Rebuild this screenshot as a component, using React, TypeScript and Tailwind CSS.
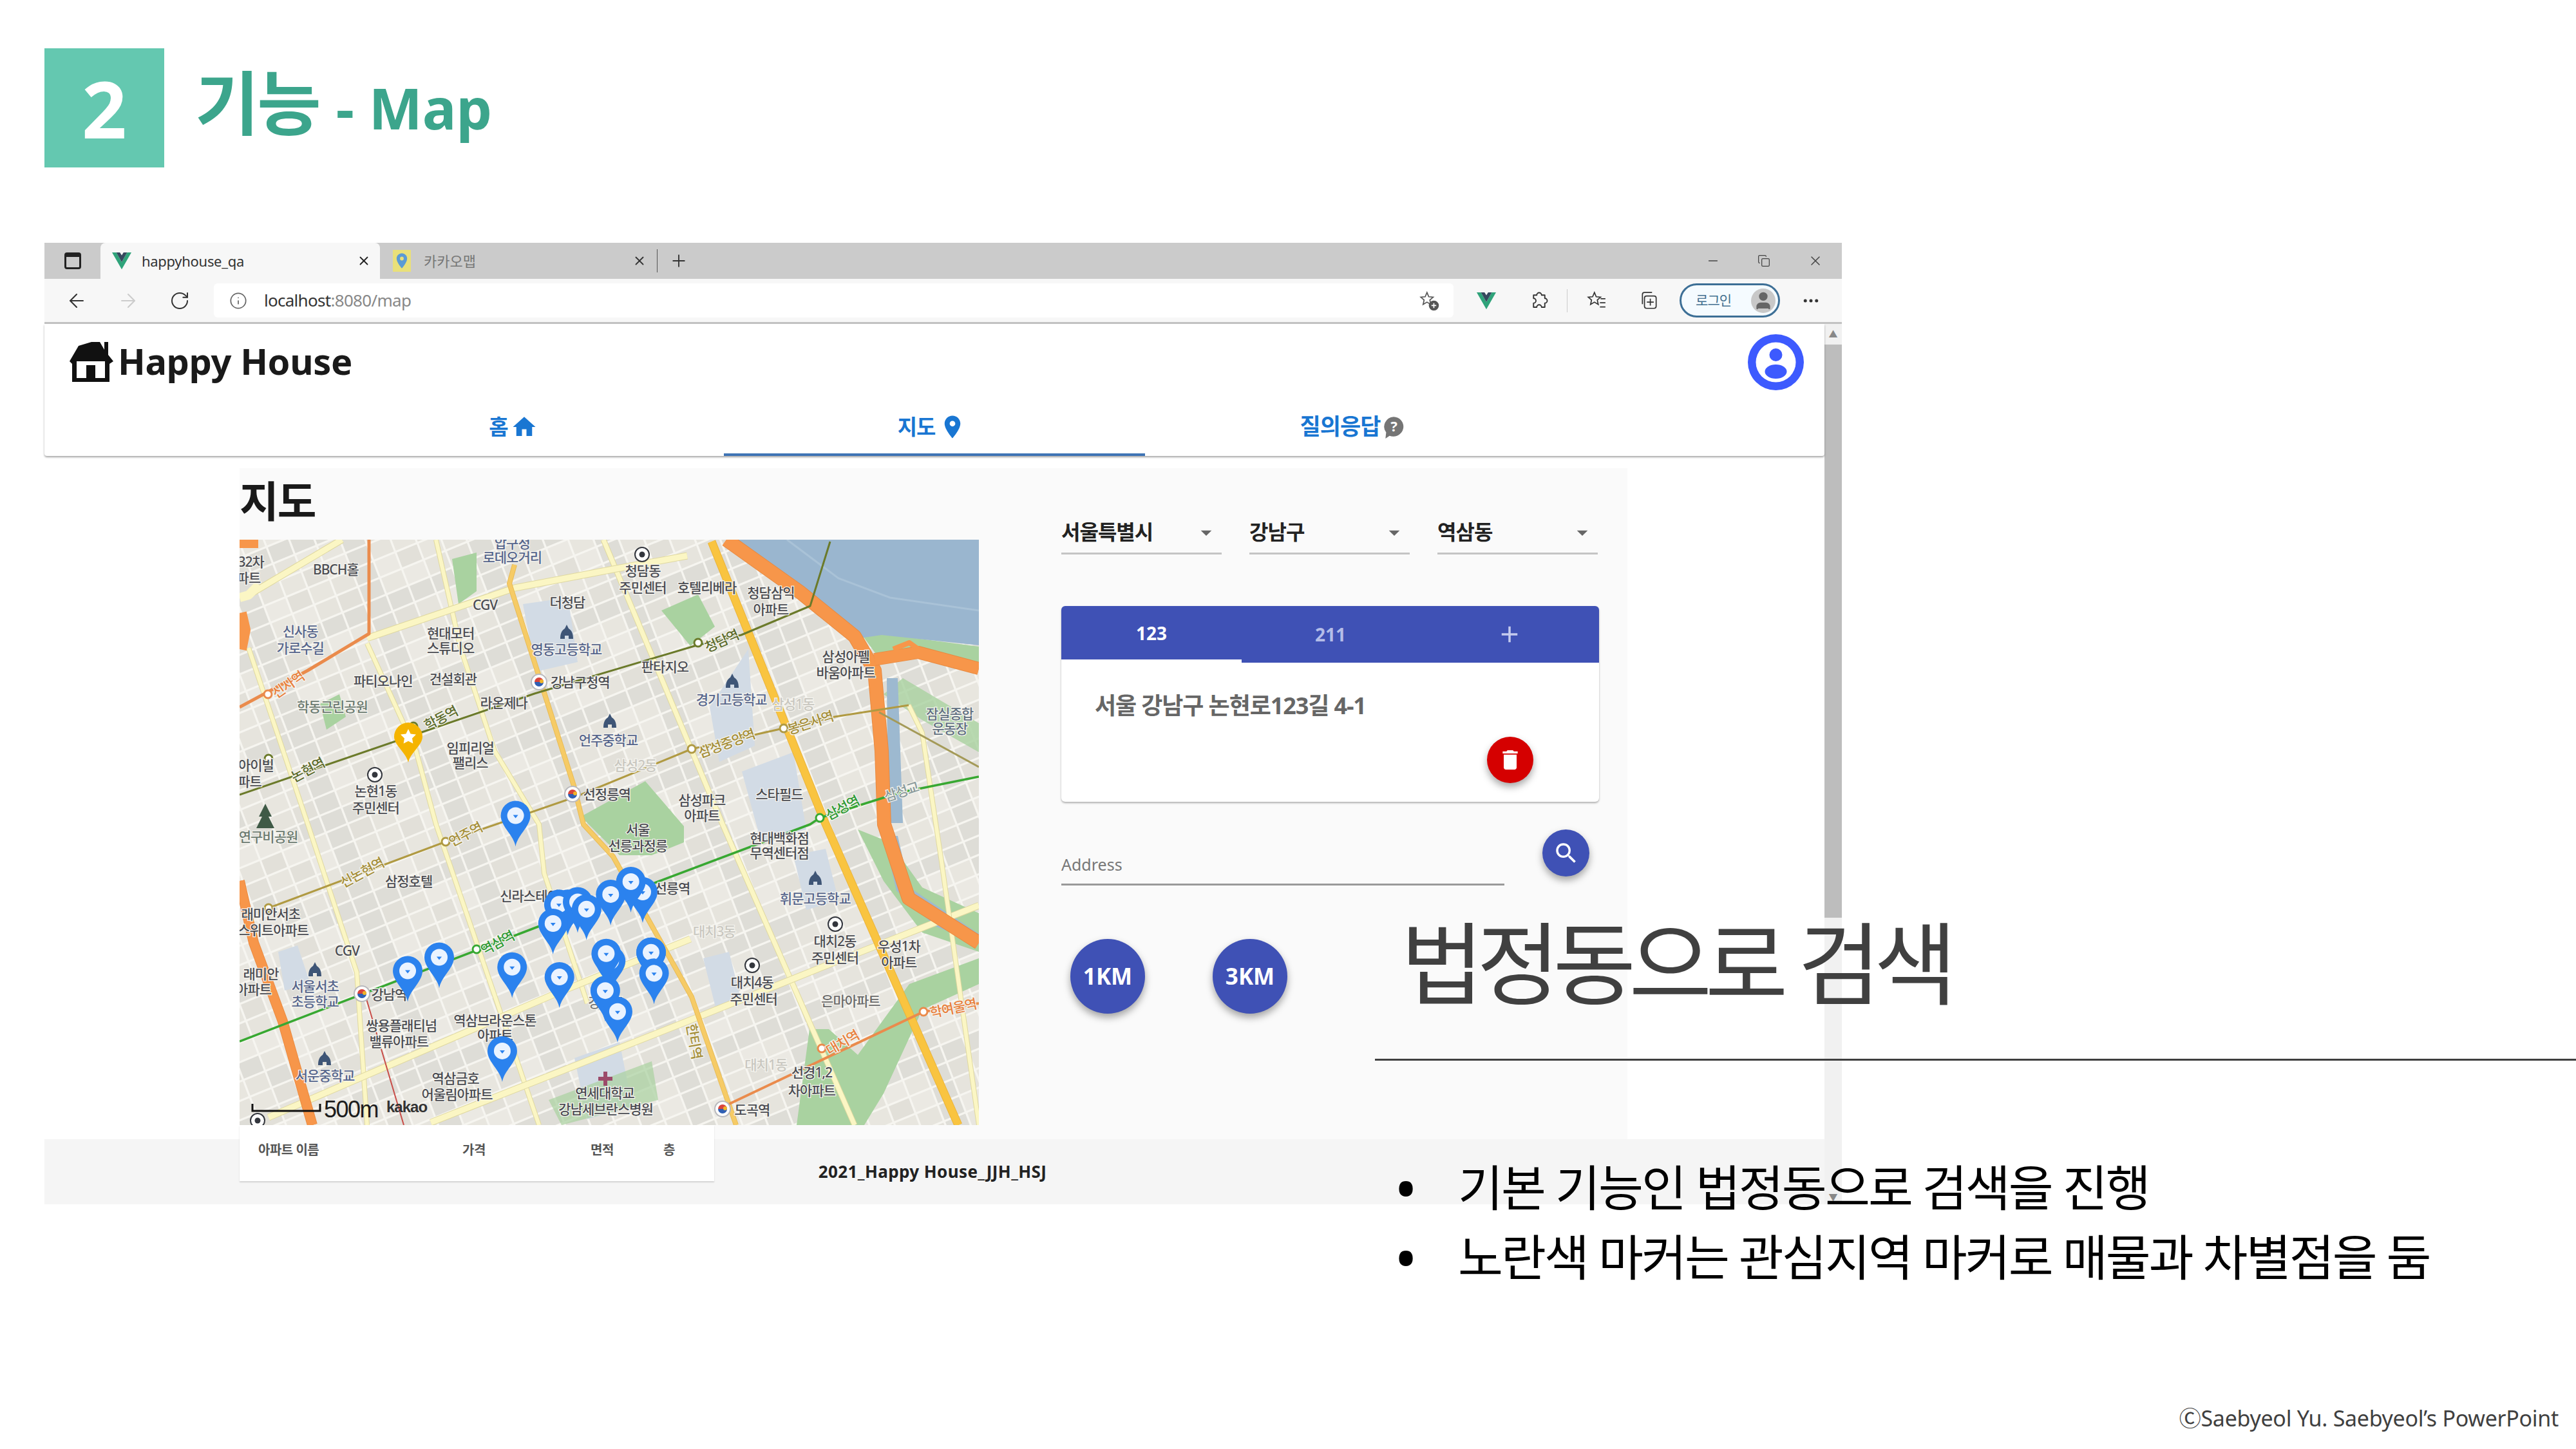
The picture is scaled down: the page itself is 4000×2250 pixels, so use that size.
import React from "react";
import { ArrowLeft, ArrowRight, RotateCw, Info, Plus, Minus, X, Copy, Ellipsis, User } from "lucide-react";
import { MdAdd, MdArrowDropDown, MdDelete, MdHome, MdPlace, MdSearch } from "react-icons/md";

const zx = (x: number) => x / 1.307 - 32;
const y3 = (y: number) => y / 2.8 - 118;
const y4 = (y: number) => y / 2.613 + 442;

type L = [string, number, number, number?, string?, number?];
const DK = "#4b4c52";
const BL = "#56658c";
const OR = "#e8803c";
const GD = "#a58f3a";
const GR = "#2f9a35";
const OL = "#5c6b2c";
const FD = "#c9c7c0";

const labels3: L[] = [
  ["BBCH홀", 237, 458], ["압구정", 595, 345, 0, BL], ["로데오거리", 595, 405, 0, BL], ["청담동", 860, 465], ["주민센터", 860, 538],
  ["호텔리베라", 990, 538], ["청담삼익", 1120, 560], ["아파트", 1120, 632], ["더청담", 707, 603], ["CGV", 540, 612],
  ["신사동", 165, 728, 0, BL], ["가로수길", 165, 800, 0, BL], ["현대모터", 470, 735], ["스튜디오", 470, 800], ["영동고등학교", 705, 805, 0, BL],
  ["청담역", 1020, 770, -24, OL], ["판타지오", 905, 882], ["삼성아펠", 1272, 838], ["바움아파트", 1272, 908], ["파티오나인", 333, 943],
  ["건설회관", 475, 935], ["강남구청역", 733, 948], ["신사역", 140, 960, -35, OR], ["라온제나", 578, 1040], ["학동근린공원", 230, 1055, 0, "#6b7a70"],
  ["경기고등학교", 1040, 1025, 0, BL], ["삼성1동", 1165, 1045, 0, FD], ["잠실종합", 1483, 1085, 0, "#5f6f80"], ["운동장", 1483, 1150, 0, "#5f6f80"],
  ["학동역", 450, 1105, -28, OL], ["봉은사역", 1200, 1125, -18, GD], ["언주중학교", 790, 1200, 0, BL], ["삼성중앙역", 1030, 1215, -20, GD],
  ["임피리얼", 510, 1235], ["팰리스", 510, 1300], ["삼성2동", 845, 1310, 0, FD], ["논현1동", 318, 1423], ["주민센터", 318, 1495],
  ["선정릉역", 787, 1437], ["삼성파크", 980, 1462], ["아파트", 980, 1530], ["스타필드", 1137, 1435], ["삼성역", 1265, 1495, -28, GR],
  ["삼성교", 1385, 1425, -18, "#8a9a9a"], ["아이빌", 75, 1310], ["파트", 62, 1380], ["논현역", 180, 1330, -28, OL], ["32차", 65, 425], ["파트", 60, 495],
];
const labels4: L[] = [
  ["연구비공원", 100, 50, 0, "#6b7a70"], ["언주역", 500, 40, -28, GD], ["서울", 850, 20], ["선릉과정릉", 850, 85], ["현대백화점", 1137, 55], ["무역센터점", 1137, 115],
  ["신논현역", 290, 195, -28, GD], ["삼정호텔", 385, 230], ["신라스테이", 630, 290], ["선릉역", 920, 258], ["휘문고등학교", 1210, 300, 0, BL],
  ["래미안서초", 105, 362], ["스위트아파트", 110, 428], ["CGV", 260, 512], ["대치2동", 1250, 472], ["주민센터", 1250, 540], ["우성1차", 1380, 495], ["아파트", 1380, 558],
  ["역삼역", 565, 480, -28, GR], ["대치3동", 1005, 435, 0, FD], ["래미안", 85, 605], ["아파트", 70, 670], ["서울서초", 195, 655, 0, BL], ["초등학교", 195, 718, 0, BL],
  ["강남역", 345, 690], ["대치4동", 1082, 640], ["주민센터", 1085, 708], ["은마아파트", 1282, 715, 0, "#6a6a6a"], ["학여울역", 1490, 745, -12, OR],
  ["쌍용플래티넘", 370, 815], ["밸류아파트", 365, 880], ["역삼브라운스톤", 560, 795], ["아파트", 560, 855], ["대치역", 1265, 885, -30, OR], ["대치1동", 1110, 975, 0, FD],
  ["선경1,2", 1203, 1005], ["차아파트", 1203, 1078], ["서운중학교", 215, 1020, 0, BL], ["역삼금호", 480, 1030], ["어울림아파트", 483, 1095],
  ["연세대학교", 783, 1090], ["강남세브란스병원", 785, 1155], ["도곡역", 1082, 1158], ["한티역", 965, 880, 80, GD], ["강남구", 785, 720, 0, "#777"],
];

const pins: [number, number][] = [
  [602, 90], [708, 450], [690, 450], [728, 440], [860, 400], [836, 358], [795, 410], [746, 470], [678, 528], [877, 645], [877, 645], [447, 665], [383, 720], [595, 705], [691, 745],
  [795, 680], [786, 650], [883, 730], [784, 800], [809, 885], [575, 1045],
];

const cells = () => {
  const out: React.ReactNode[] = [];
  const tones = ["#e8e6df", "#e2e0d9", "#ebe9e3", "#dedDd7", "#e6e4dd"];
  for (let i = -32; i < 44; i++) {
    for (let j = -12; j < 46; j++) {
      const ox = i * 34 + j * 10;
      const oy = -i * 14 + j * 26;
      if (ox < -50 || ox > 1170 || oy < -40 || oy > 930) continue;
      const h = Math.abs((i * 7 + j * 13 + i * j * 3) % 5);
      const a = 31;
      const b = 23;
      const pts = `${ox},${oy} ${ox + a},${oy - a * 0.41} ${ox + a + b * 0.38},${oy - a * 0.41 + b} ${ox + b * 0.38},${oy + b}`;
      out.push(<polygon key={`${i}-${j}`} points={pts} fill={tones[h]} />);
    }
  }
  return out;
};

function Road({ d, w, c, edge }: { d: string; w: number; c: string; edge?: string }) {
  return (
    <>
      {edge ? <polyline points={d} fill="none" stroke={edge} strokeWidth={w + 2} strokeLinejoin="round" /> : null}
      <polyline points={d} fill="none" stroke={c} strokeWidth={w} strokeLinejoin="round" />
    </>
  );
}

function Pin({ x, y }: { x: number; y: number }) {
  return (
    <g transform={`translate(${x} ${y})`}>
      <path d="M0 0 C-3 -18 -23 -31 -23 -48 A23 23 0 1 1 23 -48 C23 -31 3 -18 0 0Z" fill="#2b82ee" />
      <circle cx="0" cy="-48" r="13" fill="#eaf3ff" />
      <path d="M-4 -49 H4 L0 -44Z" fill="#2b82ee" />
    </g>
  );
}

function Station({ x, y }: { x: number; y: number }) {
  return (
    <g>
      <circle cx={x} cy={y} r="12" fill="#fff" stroke="#b9b9bd" strokeWidth="2" />
      <path d={`M${x - 7} ${y} A7 7 0 0 1 ${x + 7} ${y}Z`} fill="#d8443c" />
      <path d={`M${x - 7} ${y} A7 7 0 0 0 ${x + 7} ${y}Z`} fill="#2f5fb3" />
      <circle cx={x + 4} cy={y - 1} r="3" fill="#f0b429" />
    </g>
  );
}

function Target({ x, y }: { x: number; y: number }) {
  return (
    <g>
      <circle cx={x} cy={y} r="11" fill="#fff" stroke="#33363d" strokeWidth="2" />
      <circle cx={x} cy={y} r="4.5" fill="#33363d" />
    </g>
  );
}

function School({ x, y }: { x: number; y: number }) {
  return <path transform={`translate(${x} ${y})`} d="M0 -14 L3 -8 C8 -5 10 0 10 8 H3 V3 H-3 V8 H-10 C-10 0 -8 -5 -3 -8Z" fill="#3e5576" />;
}

function KakaoMap() {
  const lab = (l: L, yf: (n: number) => number, key: string) => {
    const x = zx(l[1]);
    const y = yf(l[2]);
    const rot = l[3] ?? 0;
    return (
      <text
        key={key}
        x={x}
        y={y}
        textAnchor="middle"
        dominantBaseline="central"
        fontSize={l[5] ?? 21}
        fontWeight={500}
        letterSpacing={-1}
        fill={l[4] ?? DK}
        stroke="#f5f4ef"
        strokeWidth={2.5}
        paintOrder="stroke"
        transform={rot ? `rotate(${rot} ${x} ${y})` : undefined}
      >
        {l[0]}
      </text>
    );
  };
  return (
    <svg viewBox="0 0 1148 909" className="block w-[1148px] h-[909px] shrink-0">
      <rect width="1148" height="909" fill="#f6f5f0" />
      {cells()}
      <g fill="#d2dbe5">
        <polygon points="440,100 510,90 525,190 460,205" />
        <polygon points="730,260 790,170 800,320 745,345" />
        <polygon points="780,360 860,330 880,450 810,470" />
        <polygon points="860,490 910,480 930,560 880,575" />
        <polygon points="60,640 90,630 110,690 70,700" />
        <polygon points="520,805 590,780 610,880 540,900" />
        <polygon points="720,650 760,640 780,720 740,730" />
      </g>
      <g fill="#a9d2a0">
        <polygon points="655,110 712,85 738,135 700,165" />
        <polygon points="125,255 155,240 165,275 135,295" />
        <polygon points="330,30 368,20 368,80 340,100" />
        <polygon points="530,430 630,375 690,445 690,470 640,490 590,490" />
        <polygon points="480,870 640,810 650,870 500,909" opacity="0.7" />
        <polygon points="865,909 885,760 915,760 960,800 1040,690 1148,650 1148,690 1060,730 1000,860 970,909" />
        <polygon points="1000,240 1030,215 1148,285 1148,330 1060,280" opacity="0.8" />
        <polygon points="960,450 1010,470 1060,540 1148,580 1148,640 1060,610 1000,530" />
        <polygon points="968,150 997,146 1148,166 1148,196 1054,168 990,180" />
      </g>
      <polygon points="1000,460 1022,460 1040,540 1148,612 1148,628 1080,600 1020,545" fill="#9db9d0" />
      <polygon points="1005,215 1022,215 1030,440 1007,440" fill="#9db9d0" />
      <polygon points="768,0 894,96 963,153 997,148 1148,164 1148,0" fill="#9ab6cf" />
      <polyline points="850,0 930,60 1010,90 1148,110" fill="none" stroke="#a9c2d7" strokeWidth="3" />

      <Road d="14,168 106,442 182,672 198,909" w={6} c="#fbf6c4" edge="#dfd8a0" />
      <Road d="198,161 274,328 305,442 465,909" w={6} c="#fbf6c4" edge="#dfd8a0" />
      <Road d="305,0 343,168 396,328 465,442 473,518 540,720" w={6} c="#fbf6c4" edge="#dfd8a0" />
      <Road d="565,0 750,442 955,909" w={7} c="#fbf6c4" edge="#dfd8a0" />
      <Road d="14,86 159,0" w={9} c="#fbf6c4" edge="#dfd8a0" />
      <Road d="0,90 14,86 30,70" w={14} c="#fbf6c4" />
      <Road d="198,153 427,75 580,46 695,25" w={9} c="#fbf6c4" edge="#dfd8a0" />
      <Road d="45,897 488,706 700,620" w={9} c="#fbf6c4" edge="#dfd8a0" />
      <Road d="297,905 695,748 924,656 1148,568" w={9} c="#fbf6c4" edge="#dfd8a0" />
      <Road d="1039,257 1060,300 1090,500 1148,909" w={6} c="#fbf6c4" edge="#dfd8a0" />
      <Road d="427,39 419,68 519,382 534,442 580,492 702,710 771,909" w={6} c="#f6cb66" edge="#e8bb55" />
      <Road d="733,3 909,439 1116,909" w={11} c="#f9c440" edge="#eab33a" />
      <Road d="0,0 29,0" w={26} c="#f7964a" />
      <Road d="0,114 6,140 0,170" w={22} c="#f7964a" />
      <Road d="0,530 22,626 67,748 113,909" w={14} c="#f7964a" edge="#ea8a40" />
      <Road d="201,0 201,146 106,203 0,260" w={5} c="#ea8b4c" />
      <Road d="748,882 1062,733 1148,720" w={4} c="#ea8b4c" />
      <Road d="756,0 871,82 955,150 986,203 997,328 1001,442 1039,557 1148,626" w={20} c="#f7964a" edge="#e88a40" />
      <Road d="986,186 1054,175 1148,200" w={18} c="#f7964a" edge="#e88a40" />
      <Road d="1015,170 1040,160 1065,178" w={8} c="#f7964a" />
      <Road d="0,779 458,603 886,442 901,432 1024,393 1148,368" w={3.5} c="#38a832" />
      <Road d="0,396 458,239 710,164 779,148 886,103 917,3" w={3} c="#6b7a2a" />
      <Road d="45,572 320,469 520,400 702,325 924,275 1039,257" w={3} c="#b09a42" />
      <Road d="993,268 1148,353" w={3} c="#a49a58" />
      <Road d="193,700 255,909" w={2} c="#c84d48" />

      {[[45, 340, "#6b7a2a"], [270, 290, "#6b7a2a"], [712, 160, "#6b7a2a"], [702, 325, "#b09a42"], [845, 293, "#b09a42"], [320, 469, "#b09a42"], [45, 572, "#b09a42"], [901, 432, "#38a832"], [368, 636, "#38a832"], [1062, 733, "#ea8b4c"], [904, 790, "#ea8b4c"], [44, 240, "#ea8b4c"]].map(([x, y, c], i) => (
        <circle key={i} cx={x as number} cy={y as number} r="6" fill="#fff" stroke={c as string} strokeWidth="3" />
      ))}
      <Station x={465} y={221} />
      <Station x={517} y={395} />
      <Station x={190} y={705} />
      <Station x={750} y={884} />
      <Target x={625} y={23} />
      <Target x={210} y={365} />
      <Target x={925} y={597} />
      <Target x={796} y={661} />
      <Target x={28} y={902} />
      <School x={508} y={146} />
      <School x={765} y={222} />
      <School x={575} y={284} />
      <School x={894} y={528} />
      <School x={117} y={670} />
      <School x={132} y={808} />
      <path d="M565 826 h6 v8 h8 v6 h-8 v8 h-6 v-8 h-8 v-6 h8z" fill="#9c4a6a" />
      <path d="M40 410 L50 430 H45 L54 448 H26 L35 430 H30Z" fill="#3f5a46" />

      {labels3.map((l, i) => lab(l, y3, `a${i}`))}
      {labels4.map((l, i) => lab(l, y4, `b${i}`))}
      {pins.map(([x, y], i) => (
        <Pin key={i} x={zx(x)} y={y4(y)} />
      ))}
      <g transform="translate(262 346)">
        <path d="M0 0 C-3 -15 -22 -27 -22 -40 A22 22 0 1 1 22 -40 C22 -27 3 -15 0 0Z" fill="#f5b400" />
        <path d="M0 -52 L3.6 -44.5 L12 -43.4 L6 -37.6 L7.4 -29.4 L0 -33.3 L-7.4 -29.4 L-6 -37.6 L-12 -43.4 L-3.6 -44.5Z" fill="#fff" />
      </g>
      <path d="M20 876 V887 H125 V876" fill="none" stroke="#111" strokeWidth="3" />
      <text x="131" y="897" fontSize="36" letterSpacing="-1.5" fill="#1c1c1c" fontFamily="'Liberation Sans',sans-serif">500m</text>
      <text x="228" y="889" fontSize="24" fontWeight="700" letterSpacing="-1" fill="#333" fontFamily="'Liberation Sans',sans-serif">kakao</text>
    </svg>
  );
}

function VueMark({ size }: { size: number }) {
  return (
    <svg viewBox="0 0 32 28" width={size} height={size} className="shrink-0">
      <path d="M0 0 L16 28 L32 0 H25 L16 16 L7 0Z" fill="#2fa37a" />
      <path d="M7 0 L16 16 L25 0 H19 L16 5 L13 0Z" fill="#35495e" />
    </svg>
  );
}

const STAR = "M12 3 L14.6 9.2 L21 9.8 L16.2 14 L17.6 20.4 L12 17 L6.4 20.4 L7.8 14 L3 9.8 L9.4 9.2Z";

function StarPlus() {
  return (
    <svg viewBox="0 0 30 30" className="w-[32px] h-[32px] text-[#555]" fill="none" stroke="currentColor" strokeWidth="1.6">
      <path d={STAR} />
      <circle cx="22" cy="22" r="6.5" fill="#555" />
      <path d="M22 18.5 V25.5 M18.5 22 H25.5" stroke="#fff" />
    </svg>
  );
}

function FavStar() {
  return (
    <svg viewBox="0 0 30 30" className="w-[32px] h-[32px] text-[#333]" fill="none" stroke="currentColor" strokeWidth="1.6">
      <path d={STAR} />
      <path d="M21 12 H28 M20 18 H28 M20 24 H28" />
    </svg>
  );
}

function Collections() {
  return (
    <svg viewBox="0 0 30 30" className="w-[32px] h-[32px] text-[#333]" fill="none" stroke="currentColor" strokeWidth="1.6">
      <rect x="8" y="8" width="17" height="18" rx="3" />
      <path d="M5 20 V6 A3 3 0 0 1 8 3 H19" />
      <path d="M16.5 12 V22 M11.5 17 H21.5" />
    </svg>
  );
}

function ExtensionIcon() {
  return (
    <svg viewBox="0 0 24 24" className="w-[30px] h-[30px] text-[#333]" fill="none" stroke="currentColor" strokeWidth="1.5" strokeLinejoin="round">
      <path d="M9 5 A3 3 0 0 1 15 5 H19 V9 A3 3 0 0 1 19 15 V20 H15 A3 3 0 0 0 9 20 H5 V15 A3 3 0 0 0 5 9 V5Z" />
    </svg>
  );
}

function Select({ label }: { label: string }) {
  return (
    <div className="w-[249px] h-[66px] flex items-center justify-between border-b-[3px] border-[#c4c4c4] pr-[4px]">
      <span className="text-[32px] leading-none font-bold text-[#222] tracking-[-1px] mb-[2px]">{label}</span>
      <MdArrowDropDown className="text-[#666] w-[40px] h-[40px]" />
    </div>
  );
}

function Fab({ size, bg, children }: { size: string; bg: string; children: React.ReactNode }) {
  return <div className={`${size} ${bg} rounded-full flex items-center justify-center text-white shadow-[0_6px_12px_rgba(0,0,0,0.35)] shrink-0`}>{children}</div>;
}

export default function App() {
  return (
    <div className="relative w-[4000px] h-[2250px] bg-white overflow-hidden font-['Noto_Sans','Noto_Sans_CJK_KR',sans-serif]">
      <header className="flex items-center pt-[75px] pl-[69px] gap-[48px]">
        <div className="w-[186px] h-[185px] bg-[#64c8b0] flex items-center justify-center text-white text-[122px] font-bold leading-none">2</div>
        <h1 className="text-[#3ca58c] font-bold leading-none flex items-baseline gap-[26px] mb-[16px]">
          <span className="text-[108px] tracking-[-3px]">기능</span>
          <span className="text-[88px]">- Map</span>
        </h1>
      </header>

      <div className="ml-[69px] mt-[117px] w-[2791px]">
        <div className="h-[56px] bg-[#cbcbcb] flex items-end">
          <div className="w-[87px] h-full flex items-center justify-center">
            <div className="w-[26px] h-[26px] rounded-[4px] border-[3px] border-[#222] border-t-[7px]" />
          </div>
          <div className="w-[434px] h-full bg-[#f7f7f7] rounded-t-[8px] flex items-center pl-[18px] pr-[14px] gap-[16px]">
            <VueMark size={30} />
            <span className="text-[22px] text-[#333] flex-1 tracking-[-0.3px]">happyhouse_qa</span>
            <X className="w-[22px] h-[22px] text-[#222]" />
          </div>
          <div className="w-[430px] h-full flex items-center pl-[20px] pr-[16px] gap-[20px]">
            <div className="w-[28px] h-[34px] bg-[#e9e07a] flex items-center justify-center">
              <MdPlace className="w-[30px] h-[30px] text-[#5b9bd5]" />
            </div>
            <span className="text-[22px] text-[#777] flex-1">카카오맵</span>
            <X className="w-[22px] h-[22px] text-[#333]" />
          </div>
          <div className="w-[1px] h-[36px] bg-[#555] mb-[10px] mr-[18px]" />
          <Plus className="w-[30px] h-[30px] text-[#333] mb-[13px]" strokeWidth={1.5} />
          <div className="flex-1 h-full flex items-center justify-end pr-[29px] gap-[58px] text-[#444]">
            <Minus className="w-[22px] h-[22px]" strokeWidth={1.5} />
            <Copy className="w-[20px] h-[20px]" strokeWidth={1.5} />
            <X className="w-[24px] h-[24px]" strokeWidth={1.5} />
          </div>
        </div>

        <div className="h-[70px] bg-[#f7f7f7] border-b-[3px] border-[#c2c2c2] flex items-center">
          <div className="w-[80px] ml-[10px] flex justify-center"><ArrowLeft className="w-[34px] h-[34px] text-[#333]" strokeWidth={1.5} /></div>
          <div className="w-[81px] flex justify-center"><ArrowRight className="w-[34px] h-[34px] text-[#ccc]" strokeWidth={1.5} /></div>
          <div className="w-[79px] flex justify-center"><RotateCw className="w-[32px] h-[32px] text-[#333]" strokeWidth={1.5} /></div>
          <div className="ml-[13px] w-[1926px] h-[53px] bg-white rounded-[6px] flex items-center pl-[24px] pr-[22px]">
            <Info className="w-[28px] h-[28px] text-[#666]" strokeWidth={1.5} />
            <span className="ml-[26px] text-[26px] tracking-[-0.7px] text-[#333] flex-1">
              localhost<span className="text-[#888]">:8080/map</span>
            </span>
            <StarPlus />
          </div>
          <div className="w-[102px] flex justify-center"><VueMark size={30} /></div>
          <div className="w-[62px] flex justify-center"><ExtensionIcon /></div>
          <div className="w-[1px] h-[36px] bg-[#ccc] ml-[12px]" />
          <div className="w-[90px] flex justify-center"><FavStar /></div>
          <div className="w-[74px] flex justify-center"><Collections /></div>
          <div className="ml-[10px] w-[156px] h-[53px] rounded-full border-[3px] border-[#3d6f96] bg-[#f5fbff] flex items-center justify-between pl-[22px] pr-[4px]">
            <span className="text-[21px] text-[#44708f] tracking-[-1px]">로그인</span>
            <div className="w-[38px] h-[38px] rounded-full bg-[#c8c8c8] flex items-center justify-center overflow-hidden">
              <User className="w-[32px] h-[32px] text-[#666] fill-[#666]" />
            </div>
          </div>
          <div className="w-[96px] flex justify-center"><Ellipsis className="w-[30px] h-[30px] text-[#333]" /></div>
        </div>

        <div className="flex h-[1367px]">
          <div className="w-[2764px] flex flex-col">
            <div className="h-[205px] bg-white rounded-b-[4px] shadow-[0_2px_3px_rgba(0,0,0,0.35)] relative">
              <div className="h-[118px] flex items-center justify-between pl-[38px] pr-[32px]">
                <div className="flex items-center gap-[6px]">
                  <svg viewBox="0 0 68 66" className="w-[70px] h-[66px]">
                    <path d="M34 2 L47 2 L54 14 L54 2 L60 2 L60 22 L68 32 L62 36 L62 64 L4 64 L4 36 L0 32 L14 8 Z" fill="#111" />
                    <rect x="11" y="32" width="44" height="26" fill="#fff" />
                    <rect x="26" y="38" width="14" height="26" fill="#111" />
                  </svg>
                  <span className="text-[56px] font-bold text-[#1a1a1a] leading-none tracking-[-0.4px] whitespace-nowrap mb-[4px]">Happy House</span>
                </div>
                <svg viewBox="0 0 87 87" className="w-[87px] h-[87px]">
                  <circle cx="43.5" cy="43.5" r="43.5" fill="#3d5afe" />
                  <circle cx="43.5" cy="43.5" r="31" fill="#fff" />
                  <circle cx="43.5" cy="32" r="10" fill="#3d5afe" />
                  <ellipse cx="43.5" cy="58" rx="17" ry="11" fill="#3d5afe" />
                </svg>
              </div>
              <div className="h-[87px] flex justify-center">
                <div className="w-[654px] flex items-center justify-center gap-[4px] text-[#1976d2] text-[33px] font-bold tracking-[-1px] pb-[4px]">
                  홈 <MdHome className="w-[42px] h-[42px]" />
                </div>
                <div className="w-[654px] flex items-center justify-center gap-[6px] text-[#1976d2] text-[33px] font-bold tracking-[-1px] border-b-[4px] border-[#3f74b5] pr-[8px]">
                  지도 <MdPlace className="w-[42px] h-[42px]" />
                </div>
                <div className="w-[654px] flex items-center justify-center gap-[2px] text-[#1976d2] text-[35px] font-bold tracking-[-1px] pb-[4px] pr-[8px]">
                  질의응답
                  <svg viewBox="0 0 36 36" className="w-[38px] h-[38px]">
                    <path d="M18 3 A15 14.5 0 1 1 12 31 L6 35 L7 26 A15 14.5 0 0 1 18 3Z" fill="#757575" />
                    <text x="18" y="25" textAnchor="middle" fontSize="21" fontWeight="700" fill="#fff">?</text>
                  </svg>
                </div>
              </div>
            </div>

            <div className="h-[19px]" />

            <div className="ml-[303px] w-[2155px] h-[1042px] bg-[#fafafa] flex shrink-0">
              <div className="w-[1148px] shrink-0 relative z-10">
                <div className="h-[111px] flex items-center text-[66px] font-bold text-[#1a1a1a] leading-none tracking-[-2px] pb-[12px]">지도</div>
                <KakaoMap />
                <div className="w-[737px] h-[87px] bg-white shadow-[0_2px_2px_rgba(0,0,0,0.14)] pl-[29px] pt-[29px] grid grid-cols-[315px_201px_113px_auto] text-[20px] leading-none font-bold text-[#555] tracking-[-0.5px] content-start">
                  <span>아파트 이름</span>
                  <span className="pl-[2px]">가격</span>
                  <span>면적</span>
                  <span>층</span>
                </div>
              </div>
              <div className="ml-[128px] w-[835px] flex flex-col">
                <div className="mt-[68px] flex gap-[43px]">
                  <Select label="서울특별시" />
                  <Select label="강남구" />
                  <Select label="역삼동" />
                </div>
                <div className="mt-[80px] h-[304px] bg-white rounded-[6px] shadow-[0_2px_3px_rgba(0,0,0,0.3)] overflow-hidden flex flex-col">
                  <div className="h-[88px] bg-[#3f51b5] flex text-[28px] font-bold">
                    <div className="w-[280px] border-b-[5px] border-white text-white flex items-center justify-center">123</div>
                    <div className="w-[276px] text-[#b4bde8] flex items-center justify-center">211</div>
                    <div className="w-[279px] text-[#c5cbee] flex items-center justify-center"><MdAdd className="w-[42px] h-[42px]" /></div>
                  </div>
                  <div className="flex-1 relative px-[52px] pt-[49px]">
                    <p className="text-[36px] font-bold text-[#666] leading-none tracking-[-1.1px] whitespace-nowrap">서울 강남구 논현로123길 4-1</p>
                    <div className="flex justify-end pr-[50px] mt-[30px]">
                      <Fab size="w-[72px] h-[72px]" bg="bg-[#d50000]"><MdDelete className="w-[40px] h-[40px]" /></Fab>
                    </div>
                  </div>
                </div>
                <div className="mt-[43px] flex items-start">
                  <div className="w-[688px] h-[87px] flex items-end pb-[17px] border-b-[3px] border-[#999] text-[25px] leading-none text-[#777]">Address</div>
                  <div className="ml-[59px]">
                    <Fab size="w-[73px] h-[73px]" bg="bg-[#3f51b5]"><MdSearch className="w-[42px] h-[42px]" /></Fab>
                  </div>
                </div>
                <div className="mt-[83px] ml-[14px] flex gap-[105px] text-[35px] font-bold">
                  <Fab size="w-[116px] h-[116px]" bg="bg-[#3f51b5]">1KM</Fab>
                  <Fab size="w-[116px] h-[116px]" bg="bg-[#3f51b5]">3KM</Fab>
                </div>
              </div>
            </div>

            <div className="h-[101px] bg-[#f5f5f5] flex items-center justify-center text-[26px] font-bold text-[#222] tracking-[0.4px] pr-[6px]">2021_Happy House_JJH_HSJ</div>
          </div>

          <div className="w-[27px] bg-[#f1f1f1] flex flex-col items-center">
            <div className="h-[32px] flex items-center justify-center text-[14px] text-[#888] leading-none">▲</div>
            <div className="w-full h-[890px] bg-[#bdbdbd]" />
            <div className="flex-1 flex items-end justify-center pb-[4px] text-[14px] text-[#888] leading-none">▼</div>
          </div>
        </div>
      </div>

      <div className="absolute left-[2135px] top-[1421px] w-[1865px]">
        <h2 className="h-[226px] border-b-[3px] border-[#404040] pl-[40px] text-[140px] leading-[148px] text-[#404040] tracking-[-10.6px] whitespace-nowrap">법정동으로 검색</h2>
        <ul className="mt-[143px] pl-[30px] text-[76px] leading-[108px] tracking-[-2.9px] text-black whitespace-nowrap">
          <li className="flex"><span className="w-[99px] text-[96px] leading-[108px]">•</span>기본 기능인 법정동으로 검색을 진행</li>
          <li className="flex"><span className="w-[99px] text-[96px] leading-[108px]">•</span>노란색 마커는 관심지역 마커로 매물과 차별점을 둠</li>
        </ul>
      </div>

      <p className="absolute right-[27px] bottom-[31px] text-[34px] leading-none text-[#404040] tracking-[-0.3px]">ⒸSaebyeol Yu. Saebyeol’s PowerPoint</p>
    </div>
  );
}
